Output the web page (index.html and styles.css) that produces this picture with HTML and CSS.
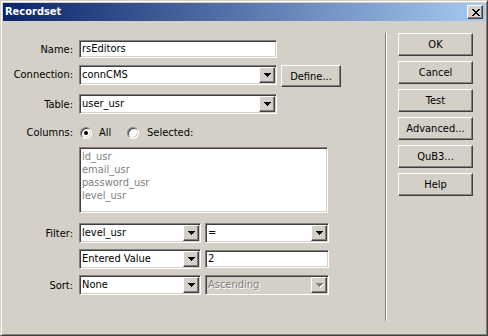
FILE: index.html
```html
<!DOCTYPE html>
<html>
<head>
<meta charset="utf-8">
<link rel="stylesheet" href="styles.css">
</head>
<body>
<div class="window">
  <div class="titlebar">
    <span class="title">Recordset</span>
    <span class="close raised"><svg width="8" height="7" viewBox="0 0 8 7"><path d="M0 0h2v1H0zM6 0h2v1H6zM1 1h2v1H1zM5 1h2v1H5zM2 2h4v1H2zM3 3h2v1H3zM2 4h4v1H2zM1 5h2v1H1zM5 5h2v1H5zM0 6h2v1H0zM6 6h2v1H6z" fill="#000"/></svg></span>
  </div>
  <div class="body">
    <div class="form">
      <div class="row r-name">
        <span class="lbl">Name:</span>
        <div class="field sunken w198 h18"><span class="val">rsEditors</span></div>
      </div>
      <div class="row r-conn">
        <span class="lbl">Connection:</span>
        <div class="field sunken select w198"><span class="val">connCMS</span><span class="arrow raised"><svg width="7" height="4" viewBox="0 0 7 4"><path d="M0 0h7v1H0zM1 1h5v1H1zM2 2h3v1H2zM3 3h1v1H3z" fill="#000"/></svg></span></div>
        <span class="btn raised define">Define...</span>
      </div>
      <div class="row r-table">
        <span class="lbl">Table:</span>
        <div class="field sunken select w198"><span class="val">user_usr</span><span class="arrow raised"><svg width="7" height="4" viewBox="0 0 7 4"><path d="M0 0h7v1H0zM1 1h5v1H1zM2 2h3v1H2zM3 3h1v1H3z" fill="#000"/></svg></span></div>
      </div>
      <div class="row r-cols">
        <span class="lbl">Columns:</span>
        <span class="radio checked"></span><span class="rlabel all">All</span>
        <span class="radio r2"></span><span class="rlabel">Selected:</span>
      </div>
      <div class="row r-list">
        <span class="lbl"></span>
        <div class="listbox sunken">
          <div class="item">id_usr</div>
          <div class="item">email_usr</div>
          <div class="item">password_usr</div>
          <div class="item">level_usr</div>
        </div>
      </div>
      <div class="row r-filter">
        <span class="lbl">Filter:</span>
        <div class="field sunken select w122"><span class="val">level_usr</span><span class="arrow raised"><svg width="7" height="4" viewBox="0 0 7 4"><path d="M0 0h7v1H0zM1 1h5v1H1zM2 2h3v1H2zM3 3h1v1H3z" fill="#000"/></svg></span></div>
        <div class="field sunken select w124 second"><span class="val">=</span><span class="arrow raised"><svg width="7" height="4" viewBox="0 0 7 4"><path d="M0 0h7v1H0zM1 1h5v1H1zM2 2h3v1H2zM3 3h1v1H3z" fill="#000"/></svg></span></div>
      </div>
      <div class="row r-val">
        <span class="lbl"></span>
        <div class="field sunken select w122"><span class="val">Entered Value</span><span class="arrow raised"><svg width="7" height="4" viewBox="0 0 7 4"><path d="M0 0h7v1H0zM1 1h5v1H1zM2 2h3v1H2zM3 3h1v1H3z" fill="#000"/></svg></span></div>
        <div class="field sunken w124 h18 second"><span class="val">2</span></div>
      </div>
      <div class="row r-sort">
        <span class="lbl">Sort:</span>
        <div class="field sunken select w122"><span class="val">None</span><span class="arrow raised"><svg width="7" height="4" viewBox="0 0 7 4"><path d="M0 0h7v1H0zM1 1h5v1H1zM2 2h3v1H2zM3 3h1v1H3z" fill="#000"/></svg></span></div>
        <div class="field sunken select w124 second disabled"><span class="val">Ascending</span><span class="arrow raised"><svg width="8" height="5" viewBox="0 0 8 5"><path d="M1 1h7v1H1zM2 2h5v1H2zM3 3h3v1H3zM4 4h1v1H4z" fill="#fff"/><path d="M0 0h7v1H0zM1 1h5v1H1zM2 2h3v1H2zM3 3h1v1H3z" fill="#808080"/></svg></span></div>
      </div>
    </div>
    <div class="sep"></div>
    <div class="buttons">
      <span class="btn raised">OK</span>
      <span class="btn raised">Cancel</span>
      <span class="btn raised">Test</span>
      <span class="btn raised">Advanced...</span>
      <span class="btn raised">QuB3...</span>
      <span class="btn raised">Help</span>
    </div>
  </div>
</div>
</body>
</html>
```

FILE: styles.css
```css
* { box-sizing: border-box; }
html, body { margin: 0; padding: 0; background: #D4D0C8; }
body {
  font-family: "DejaVu Sans Condensed", "DejaVu Sans", "Liberation Sans", sans-serif;
  font-stretch: condensed;
  font-size: 11px;
  color: #000;
}
.window {
  width: 488px;
  height: 336px;
  background: #D4D0C8;
  border: 1px solid;
  border-color: #D4D0C8 #404040 #404040 #D4D0C8;
  box-shadow: inset 1px 1px #fff, inset -1px -1px #808080;
  padding: 2px;
  display: flex;
  flex-direction: column;
}
.titlebar {
  height: 18px;
  background: linear-gradient(to right, #0A246A, #A6CAF0);
  display: flex;
  align-items: flex-start;
  justify-content: space-between;
  padding: 0 2px 0 2px;
}
.title {
  color: #fff;
  font-weight: bold;
  line-height: 18px;
  padding-left: 0;
}
.raised {
  border: 1px solid;
  border-color: #fff #404040 #404040 #fff;
  box-shadow: inset -1px -1px #808080, inset 1px 1px #D4D0C8;
  background: #D4D0C8;
}
.sunken {
  border: 1px solid;
  border-color: #808080 #fff #fff #808080;
  box-shadow: inset 1px 1px #404040, inset -1px -1px #D4D0C8;
  background: #fff;
}
.close {
  width: 16px;
  height: 14px;
  margin-top: 2px;
  display: flex;
  align-items: center;
  justify-content: center;
  padding-left: 1px;
}
.close svg, .arrow svg { display: block; shape-rendering: crispEdges; }
.body {
  flex: 1;
  display: flex;
}
.form {
  width: 382px;
  display: flex;
  flex-direction: column;
}
.row {
  display: flex;
  align-items: center;
}
.lbl {
  width: 70px;
  margin-right: 6px;
  text-align: right;
  flex: none;
}
.field {
  display: flex;
  align-items: center;
  padding: 1px;
  flex: none;
}
.val { padding-left: 1px; flex: 1; white-space: nowrap; line-height: 14px; }
.select { height: 20px; }
.h18 { height: 18px; }
.w198 { width: 198px; }
.w122 { width: 122px; }
.w124 { width: 124px; }
.second { margin-left: 4px; }
.arrow {
  width: 16px;
  height: 16px;
  display: flex;
  align-items: center;
  justify-content: center;
  flex: none;
}
.disabled { background: #D4D0C8; }
.disabled .val { color: #808080; text-shadow: 1px 1px #fff; }
.disabled .arrow svg { margin: 1px 0 0 1px; }
.btn {
  display: flex;
  align-items: center;
  justify-content: center;
  white-space: nowrap;
}
.define { width: 60px; height: 22px; margin-left: 4px; align-self: flex-start; }
.r-name { margin-top: 19px; height: 18px; }
.r-conn { margin-top: 7px; height: 22px; align-items: flex-start; }
.r-conn .lbl { line-height: 20px; }
.r-table { margin-top: 7px; height: 20px; }
.r-cols { margin-top: 12px; height: 13px; }
.radio {
  width: 12px;
  height: 12px;
  border-radius: 50%;
  border: 1px solid;
  border-color: #808080 #fff #fff #808080;
  box-shadow: inset 1px 1px #404040, inset -1px -1px #D4D0C8;
  background: #fff;
  margin-left: 1px;
  position: relative;
  flex: none;
}
.radio.checked::after {
  content: "";
  position: absolute;
  left: 3px;
  top: 3px;
  width: 4px;
  height: 4px;
  border-radius: 50%;
  background: #000;
}
.rlabel { margin-left: 7px; }
.rlabel + .radio { margin-left: 0; }
.rlabel.all { width: 28px; }
.r2 + .rlabel { margin-left: 8px; }
.r-list { margin-top: 8px; align-items: flex-start; }
.listbox {
  width: 249px;
  height: 66px;
  padding: 2px 2px;
}
.item { color: #808080; line-height: 13px; }
.r-filter { margin-top: 10px; height: 20px; }
.r-val { margin-top: 6px; height: 20px; }
.r-sort { margin-top: 6px; height: 20px; }
.sep {
  width: 2px;
  height: 288px;
  margin-top: 12px;
  border-left: 1px solid #808080;
  border-right: 1px solid #fff;
  flex: none;
}
.buttons {
  display: flex;
  flex-direction: column;
  padding-left: 11px;
  padding-top: 12px;
  gap: 5px;
}
.buttons .btn { width: 75px; height: 23px; }
```
